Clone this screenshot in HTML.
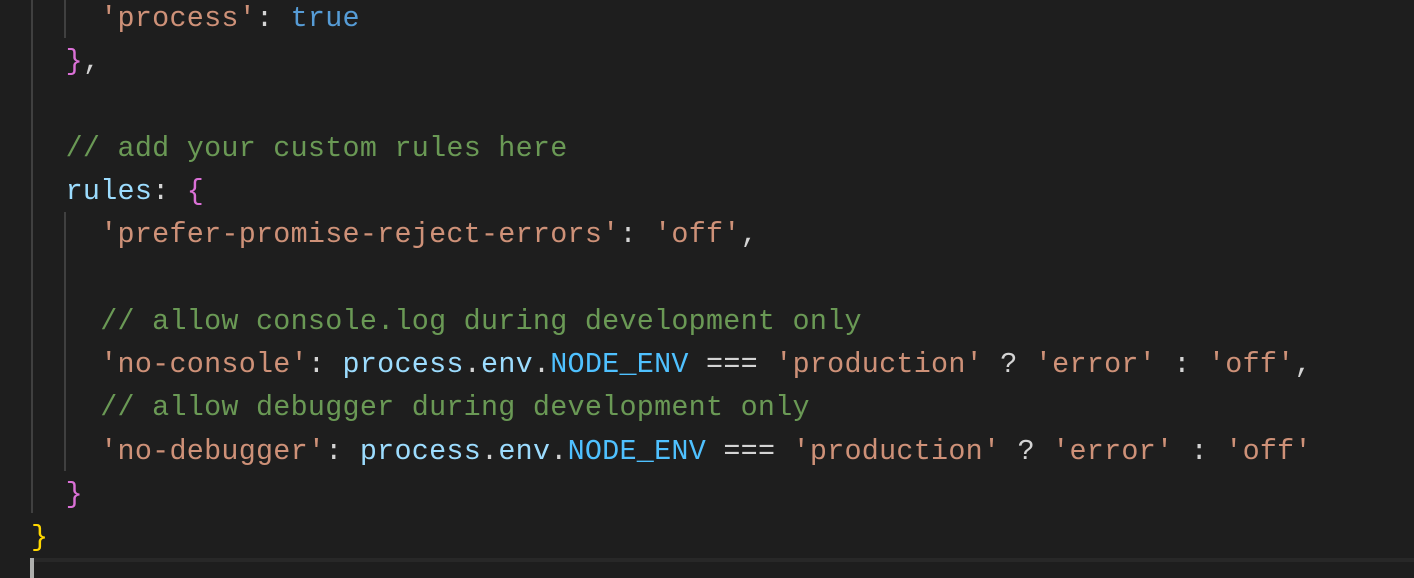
<!DOCTYPE html>
<html><head><meta charset="utf-8"><style>
html,body{margin:0;padding:0;background:#1e1e1e;width:1414px;height:578px;overflow:hidden;position:relative}
.code{position:absolute;left:31px;top:-2.8px;font-family:"Liberation Mono",monospace;font-size:28.4px;letter-spacing:0.27px;line-height:43.25px;color:#d4d4d4;white-space:pre}
.s{color:#ce9178}.c{color:#6a9955}.k{color:#569cd6}.p{color:#9cdcfe}.b{color:#da70d6}.y{color:#ffd700}.n{color:#4fc1ff}
.g{position:absolute;width:2px;background:#404040}
</style></head><body>
<div class="g" style="left:31px;top:0;height:513px"></div>
<div class="g" style="left:64px;top:0;height:38px"></div>
<div class="g" style="left:64px;top:212px;height:259px"></div>
<div style="position:absolute;left:31px;right:0;top:558px;height:4px;background:#282828"></div>
<div style="position:absolute;left:30px;top:558px;width:4px;height:20px;background:#aeafad"></div>
<div class="code">    <span class="s">'process'</span>: <span class="k">true</span>
  <span class="b">}</span>,

  <span class="c">// add your custom rules here</span>
  <span class="p">rules</span>: <span class="b">{</span>
    <span class="s">'prefer-promise-reject-errors'</span>: <span class="s">'off'</span>,

    <span class="c">// allow console.log during development only</span>
    <span class="s">'no-console'</span>: <span class="p">process</span>.<span class="p">env</span>.<span class="n">NODE_ENV</span> === <span class="s">'production'</span> ? <span class="s">'error'</span> : <span class="s">'off'</span>,
    <span class="c">// allow debugger during development only</span>
    <span class="s">'no-debugger'</span>: <span class="p">process</span>.<span class="p">env</span>.<span class="n">NODE_ENV</span> === <span class="s">'production'</span> ? <span class="s">'error'</span> : <span class="s">'off'</span>
  <span class="b">}</span>
<span class="y">}</span></div>
</body></html>
